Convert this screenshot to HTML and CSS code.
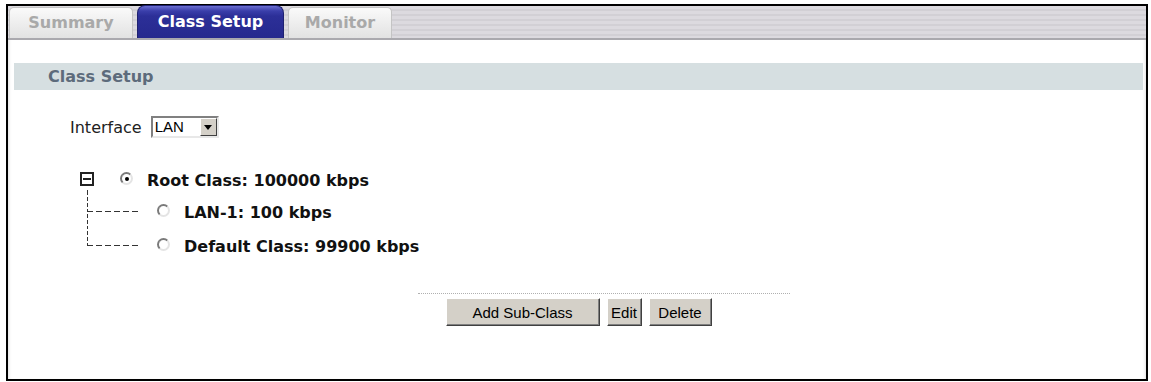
FILE: index.html
```html
<!DOCTYPE html>
<html lang="en">
<head>
    <meta charset="UTF-8">
    <title>Class Setup</title>
    <link rel="stylesheet" href="styles.css">
</head>
<body>
    <div class="frame">
        <div class="tabbar">
            <div class="tab">Summary</div>
            <div class="tab tab-active">Class Setup</div>
            <div class="tab tab-monitor">Monitor</div>
        </div>

        <div class="content">
            <div class="section-title">Class Setup</div>

            <div class="interface-row">
                <span class="interface-label">Interface</span>
                <div class="select-box">
                    <span class="select-value">LAN</span>
                    <span class="select-arrow"><span class="arrow-tri"></span></span>
                </div>
            </div>

            <div class="tree">
                <div class="tree-root">
                    <span class="collapse-box"><span class="minus"></span></span>
                    <span class="radio radio-checked"></span>
                    <span class="tree-label">Root Class: 100000 kbps</span>
                </div>
                <div class="children">
                    <div class="stem"></div>
                    <div class="child">
                        <div class="joint">
                            <div class="joint-top"></div>
                            <div class="joint-bottom"></div>
                        </div>
                        <span class="radio"></span>
                        <span class="tree-label">LAN-1: 100 kbps</span>
                    </div>
                    <div class="child">
                        <div class="joint">
                            <div class="joint-top"></div>
                        </div>
                        <span class="radio"></span>
                        <span class="tree-label">Default Class: 99900 kbps</span>
                    </div>
                </div>
            </div>

            <div class="divider"></div>

            <div class="button-row">
                <button class="btn btn-add">Add Sub-Class</button>
                <button class="btn btn-edit">Edit</button>
                <button class="btn btn-delete">Delete</button>
            </div>
        </div>
    </div>
</body>
</html>
```

FILE: styles.css
```css
body {
    margin: 0;
    background-color: #ffffff;
    font-family: "DejaVu Sans", Verdana, sans-serif;
}
.frame {
    margin: 4px 3px 0 6px;
    border: 2px solid #000;
    height: 373px;
    background-color: #fff;
    box-shadow: inset 3px 0 3px -2px #e2e2e2, inset -3px 0 3px -2px #e2e2e2;
}
.tabbar {
    height: 32px;
    display: flex;
    align-items: flex-end;
    gap: 4px;
    padding-left: 1px;
    border-bottom: 2px solid #aaa9ae;
    background: repeating-linear-gradient(to bottom, #dcdadf 0px, #dcdadf 3px, #d2d0d5 3px, #d2d0d5 5px);
}
.tab {
    width: 124px;
    height: 31px;
    box-sizing: border-box;
    border: 1px solid #c4c4c4;
    border-bottom: none;
    border-radius: 5px 5px 0 0;
    background: linear-gradient(to bottom, #fafafa, #e2e2e2);
    color: #a9a9a9;
    font-size: 16px;
    font-weight: bold;
    display: flex;
    align-items: center;
    justify-content: center;
    padding-bottom: 2px;
}
.tab-active {
    width: 147px;
    height: 33px;
    border: 1px solid #1e2070;
    border-bottom: none;
    border-radius: 8px 8px 0 0;
    background: linear-gradient(to bottom, #6a6ed0 0px, #3a3eaa 5px, #2c2f98 10px, #26298e 100%);
    color: #fff;
}
.tab-monitor {
    width: 104px;
}
.content {
    padding: 23px 3px 0 6px;
}
.section-title {
    height: 27px;
    background-color: #d6dfe1;
    color: #5d6b7b;
    font-size: 16px;
    font-weight: bold;
    display: flex;
    align-items: center;
    padding-left: 34px;
}
.interface-row {
    display: flex;
    align-items: center;
    margin-top: 26px;
    padding-left: 56px;
    height: 22px;
    font-size: 16px;
    color: #222;
}
.interface-label {
    margin-right: 9px;
}
.select-box {
    width: 68px;
    height: 22px;
    box-sizing: border-box;
    border: 2px solid;
    border-color: #808080 #e8e8e8 #e8e8e8 #808080;
    display: flex;
    background: #fff;
}
.select-value {
    flex: 1;
    font-family: "Liberation Sans", Arial, sans-serif;
    font-size: 15px;
    color: #000;
    padding-left: 2px;
    line-height: 18px;
}
.select-arrow {
    width: 17px;
    height: 18px;
    box-sizing: border-box;
    background: #d4d0c8;
    border: 1px solid;
    border-color: #fff #404040 #404040 #fff;
    display: flex;
    align-items: center;
    justify-content: center;
}
.arrow-tri {
    width: 0;
    height: 0;
    border-left: 4px solid transparent;
    border-right: 4px solid transparent;
    border-top: 5px solid #000;
}
.tree {
    margin-top: 32px;
    font-size: 16px;
    font-weight: bold;
    color: #111;
}
.tree-root {
    display: flex;
    align-items: center;
    height: 20px;
    padding-left: 66px;
}
.collapse-box {
    width: 14px;
    height: 14px;
    box-sizing: border-box;
    border: 2px solid #222;
    display: flex;
    align-items: center;
    justify-content: center;
    margin-top: -2px;
}
.minus {
    width: 8px;
    height: 2px;
    background: #222;
}
.radio {
    width: 13px;
    height: 13px;
    box-sizing: border-box;
    border-radius: 50%;
    border: 2px solid;
    border-color: #7a7a7a #e4e4e4 #e4e4e4 #7a7a7a;
    background: #fff;
    display: flex;
    align-items: center;
    justify-content: center;
    margin-right: 14px;
}
.tree-root .radio {
    margin-left: 26px;
    margin-top: -3px;
}
.radio-checked::after {
    content: "";
    width: 4px;
    height: 4px;
    border-radius: 50%;
    background: #000;
}
.children {
    margin-left: 73px;
}
.stem {
    height: 5px;
    width: 1px;
    background: #333;
}
.child {
    display: flex;
    align-items: center;
    height: 34px;
}
.joint {
    align-self: flex-start;
    display: flex;
    flex-direction: column;
    width: 54px;
    height: 34px;
    margin-right: 16px;
}
.joint-top {
    height: 17px;
    background:
        repeating-linear-gradient(to right, #333 0px, #333 6px, transparent 6px, transparent 9px) left bottom / 100% 1px no-repeat,
        repeating-linear-gradient(to bottom, transparent 0px, transparent 2px, #333 2px, #333 6px) left top / 1px 100% no-repeat;
}
.joint-bottom {
    height: 17px;
    background: repeating-linear-gradient(to bottom, transparent 0px, transparent 2px, #333 2px, #333 6px) left top / 1px 100% no-repeat;
}
.child .radio {
    margin-top: -3px;
}
.divider {
    margin: 30px 0 0 404px;
    width: 372px;
    border-top: 1px dotted #b0b0b0;
}
.button-row {
    display: flex;
    justify-content: center;
    gap: 7px;
    margin-top: 4px;
}
.btn {
    height: 28px;
    box-sizing: border-box;
    background: #d4d0c8;
    border: 1px solid;
    border-color: #ffffff #404040 #404040 #ffffff;
    box-shadow: inset -1px -1px 0 #808080;
    font-family: "Liberation Sans", Arial, sans-serif;
    font-size: 15px;
    color: #000;
    padding: 0;
}
.btn-add {
    width: 154px;
}
.btn-edit {
    width: 35px;
}
.btn-delete {
    width: 63px;
}
```
